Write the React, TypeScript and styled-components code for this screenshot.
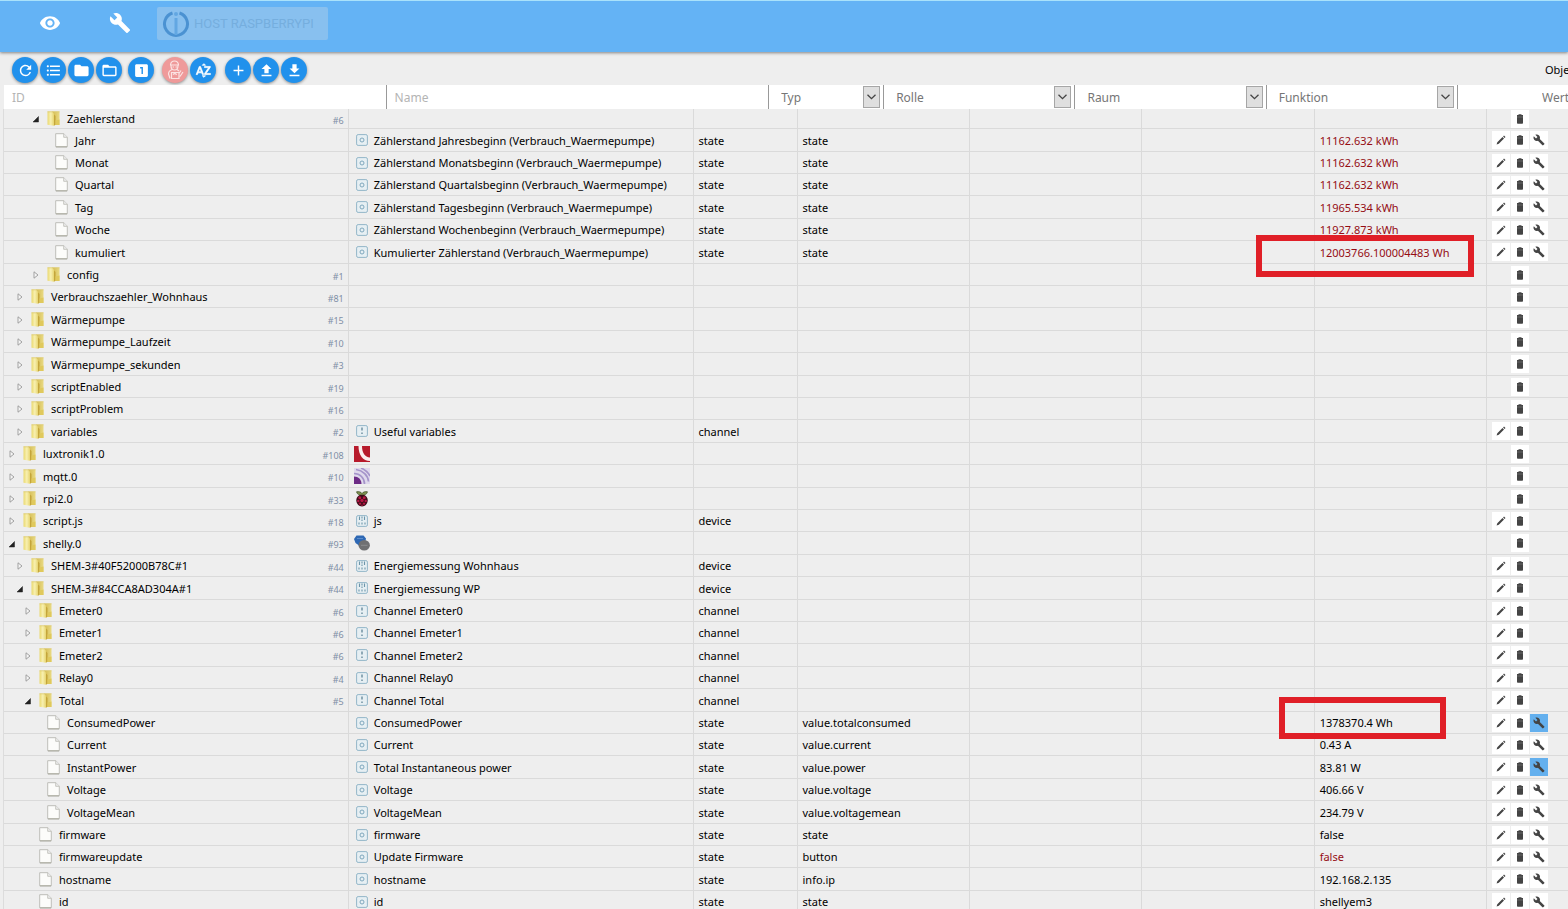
import React from 'react';
import styled, { createGlobalStyle } from 'styled-components';
import {
  MdVisibility, MdBuild, MdRefresh, MdFormatListBulleted, MdFolder, MdFolderOpen,
  MdLooksOne, MdSortByAlpha, MdAdd,
} from 'react-icons/md';

const GlobalStyle = createGlobalStyle`
  * { box-sizing: border-box; }
  body {
    margin: 0;
    background: #eee;
    color: #000;
    font: 11px/18px "Noto Sans", "Open Sans", sans-serif;
  }
  button, input, select { font: inherit; margin: 0; padding: 0; border: 0; border-radius: 0; }
  button { display: flex; align-items: center; justify-content: center; cursor: pointer; }
`;

const Shell = styled.div`
  display: flex;
  flex-direction: column;
  height: 100vh;
  overflow: hidden;
`;

const TopBar = styled.header`
  display: flex;
  flex: none;
  align-items: flex-start;
  height: 52px;
  padding: 6px 0 0 38px;
  background: #64b3f5;
  border-top: 1px solid #a9e2fb;
  box-shadow: 0 1px 3px rgba(0, 0, 0, 0.45);
`;

const NavButton = styled.button`
  width: 24px;
  height: 32px;
  margin-right: 46px;
  background: none;
  color: #fff;
  font-size: 22px;
`;

const HostButton = styled.button`
  gap: 4px;
  height: 33px;
  padding: 0 14px 0 5px;
  margin-left: -21px;
  border-radius: 2px;
  background: #88c0ef;
  color: #75aede;
  font-size: 13px;
  font-family: Roboto, sans-serif;
  white-space: nowrap;
`;

const Toolbar = styled.div`
  display: flex;
  flex: none;
  align-items: center;
  height: 33px;
  padding: 3px 0 0 12px;
`;

const ToolGroup = styled.div<{ $lead: number }>`
  display: flex;
  gap: 2px;
  margin-left: ${(p) => p.$lead}px;
`;

const ToolButton = styled.button<{ $tone?: 'red' }>`
  width: 26px;
  height: 26px;
  border-radius: 50%;
  background: ${(p) => (p.$tone === 'red' ? '#ef9a9a' : '#2191ec')};
  color: ${(p) => (p.$tone === 'red' ? '#fbe3e3' : '#fff')};
  box-shadow: 0 1px 3px rgba(0, 0, 0, 0.4);
  font-size: 17px;
`;

const SortIcon = styled(MdSortByAlpha)`
  path:not([fill='none']) {
    stroke: currentColor;
    stroke-width: 1px;
  }
  path[fill='none'] { stroke: none; }
`;

const ObjectCount = styled.span`
  width: 23px;
  margin-left: auto;
  white-space: nowrap;
`;

const FilterBar = styled.div`
  display: grid;
  flex: none;
  grid-template-columns: 2fr 2fr 115px 1fr 1fr 1fr 110px;
  height: 24px;
  margin-left: 4px;
  background: #fff;
  font-size: 12px;
`;

const TextFilter = styled.input`
  width: 100%;
  min-width: 0;
  padding: 2px 0 0 8px;
  border-right: 1px solid #999;
  background: none;
  outline: none;
  &::placeholder { color: #b4b4b4; opacity: 1; }
`;

const SelectBox = styled.label<{ $last?: boolean }>`
  display: flex;
  justify-content: space-between;
  align-items: center;
  min-width: 0;
  padding: 0 ${(p) => (p.$last ? 0 : 3)}px 0 ${(p) => (p.$last ? 84 : 12)}px;
  border-right: ${(p) => (p.$last ? 0 : 1)}px solid #999;
`;

const Select = styled.select`
  flex: 1;
  min-width: 0;
  padding-top: 2px;
  appearance: none;
  background: none;
  color: #767676;
  outline: none;
`;

const SelectArrow = styled.span`
  display: flex;
  flex: none;
  align-items: center;
  justify-content: center;
  width: 17px;
  height: 22px;
  border: 1px solid #a6a6a6;
  background: #dfdfdf;
`;

const Table = styled.table`
  display: block;
  margin-left: 3px;
  border-left: 1px solid #dcdcdc;
`;

const Body = styled.tbody`
  display: block;
`;

const Row = styled.tr`
  display: grid;
  grid-template-columns: 2fr 2fr 104px 1fr 1fr 1fr 1fr 81px;
  height: 22px;
  border-bottom: 1px solid #dadada;
  &:nth-child(5n), &:nth-child(5n + 2) { height: 23px; }
  &:first-child { height: 20px; }
`;

const Cell = styled.td<{ $red?: boolean }>`
  display: flex;
  position: relative;
  align-items: center;
  min-width: 0;
  padding: 1px 4px 0 5px;
  border-right: 1px solid #dadada;
  color: ${(p) => (p.$red ? '#950d14' : '#000')};
  white-space: nowrap;
  &:last-child { border-right: 0; padding: 0 0 0 5px; }
`;

const TreeCell = styled(Cell)<{ $level: number }>`
  padding-left: ${(p) => 3 + p.$level * 8}px;
`;

const Expander = styled.button`
  flex: none;
  width: 10px;
  height: 16px;
  background: none;
`;

const IconSlot = styled.span<{ $width: number; $gap: number }>`
  display: flex;
  flex: none;
  justify-content: center;
  width: ${(p) => p.$width}px;
  margin-right: ${(p) => p.$gap}px;
  padding-bottom: 1px;
`;

const Blank = styled.span`
  flex: none;
  width: 10px;
`;

const Count = styled.span`
  margin-left: auto;
  padding-top: 3px;
  color: #7f8ea6;
  font-size: 9px;
  line-height: 14px;
`;

const Actions = styled.div`
  display: grid;
  grid-template-columns: repeat(3, 18px);
  gap: 1px;
`;

const ActionButton = styled.button<{ $column: number; $active?: boolean }>`
  grid-column: ${(p) => p.$column};
  height: 18px;
  background: ${(p) => (p.$active ? '#64b0ee' : '#fff')};
  color: #444;
  font-size: 12px;
`;

const Marker = styled.span<{ $left: number; $top: number; $width: number }>`
  position: absolute;
  z-index: 1;
  left: ${(p) => p.$left}px;
  top: ${(p) => p.$top}px;
  width: ${(p) => p.$width}px;
  height: 42px;
  border: 6px solid #e01f27;
  pointer-events: none;
`;

const HostLogo = () => (
  <svg width="28" height="28" viewBox="0 0 28 28" fill="none" stroke="#4b92d2">
    <path d="M10.500 3A11.500 11.500 0 1 0 17.500 3" strokeWidth="3" />
    <path d="M14 8v17" strokeWidth="3" stroke="#62a7e2" />
    <circle cx="14" cy="4" r="2" fill="#62a7e2" stroke="none" />
  </svg>
);

const ExpertIcon = () => (
  <svg width="20" height="20" viewBox="0 0 20 20" fill="none" stroke="currentColor" strokeWidth="1.200">
    <path d="M5.500 4.500C6 2 7.500 1 9.500 1s3.500 1 4 3.500M5 5h9M6 5.500c0 3 1.500 4.500 3.500 4.500S13 8.500 13 5.500" />
    <path d="M7 9.500c-2.500 1-3.500 2-3.500 4.500l1.500 4.500M12 9.500l2 1.500M6.500 12.500h7.500v6H6.500zM15 16.500l3-4.500M16 10.500l-2 3" />
    <path d="M8 14.500c1.500-1.500 3-1 3.500.5M7.500 7h1.500M10.500 7H12" />
  </svg>
);

const TransferIcon = ({ up }: { up?: boolean }) => (
  <svg width="17" height="17" viewBox="0 0 24 24" fill="currentColor">
    <path d={up ? 'M9 16h6v-6h4l-7-7-7 7h4zm-4 2h14v2H5z' : 'M19 9h-4V3H9v6H5l7 7 7-7zM5 18v2h14v-2z'} />
  </svg>
);

const Chevron = () => (
  <svg width="9" height="6" viewBox="0 0 9 6" fill="none" stroke="#444" strokeWidth="1.300">
    <path d="M.5.7l4 4 4-4" />
  </svg>
);

const Arrow = ({ open }: { open?: boolean }) => (
  <svg width="8" height="8" viewBox="0 0 8 8">
    {open
      ? <path d="M6.500 1.500V7H1z" fill="#222" stroke="#222" strokeWidth=".5" />
      : <path d="M2 .8l4 3.200-4 3.200z" fill="#f6f6f6" stroke="#999" strokeWidth=".9" />}
  </svg>
);

const FolderIcon = () => (
  <svg width="13" height="15" viewBox="0 0 13 15">
    <defs>
      <linearGradient id="folder-front" x1="0" x2="1">
        <stop offset="0" stopColor="#ead970" />
        <stop offset=".5" stopColor="#f8f0b0" />
        <stop offset="1" stopColor="#e6d470" />
      </linearGradient>
      <linearGradient id="folder-back" x1="0" x2="1">
        <stop offset="0" stopColor="#d3b94e" />
        <stop offset="1" stopColor="#e9da84" />
      </linearGradient>
    </defs>
    <path d="M5 .5h7.500v13.500H5z" fill="url(#folder-back)" />
    <path d="M.5.5H5l2 2v12.300L.5 13.800z" fill="url(#folder-front)" />
    <path d="M7 3.500v11.300l1.500-1V5z" fill="#c4a53a" />
    <path d="M8.500 9.500l4-1V14h-4z" fill="#e0c95c" />
    <path d="M.5.800h12" stroke="#dccb74" strokeWidth=".8" />
  </svg>
);

const FileIcon = () => (
  <svg width="13" height="15" viewBox="0 0 13 15">
    <path d="M.7.7h8.100l3.500 3.500v9.600H.7z" fill="#fcfcfa" stroke="#b9b9b2" strokeWidth=".9" />
    <path d="M8.700.7v3.600h3.600" fill="#eee" stroke="#b9b9b2" strokeWidth=".8" />
    <path d="M1 13.900h11" stroke="#a9a99b" />
  </svg>
);

type Kind = 'state' | 'channel' | 'device' | 'lux' | 'mqtt' | 'rpi' | 'shelly';

const KindIcon = ({ kind }: { kind: Kind }) => {
  if (kind === 'lux') {
    return (
      <svg width="16" height="16" viewBox="0 0 16 16">
        <path d="M0 0h16v16H0z" fill="#b71a2b" />
        <path d="M4.500 0H8c0 7 3 11 8 11.500V15C9 15 4.500 9 4.500 0z" fill="#fbeeee" />
      </svg>
    );
  }
  if (kind === 'mqtt') {
    return (
      <svg width="16" height="16" viewBox="0 0 16 16" fill="none">
        <path d="M0 0h16v16H0z" fill="#dfd9ec" />
        <path d="M0 8.500c4.500 0 7.500 3 7.500 7.500H0z" fill="#6d2c86" />
        <path d="M0 5.500c6 0 10.500 4.500 10.500 10.500M2 1.500c7 1 12 6 12.500 12M7 0c4 1.500 7 4.500 9 8" stroke="#a594ca" strokeWidth="1.700" />
      </svg>
    );
  }
  if (kind === 'rpi') {
    return (
      <svg width="16" height="16" viewBox="0 0 16 16">
        <path d="M8 4.500C6 4.500 3 3.500 2.500.8 5 .2 7 1 8 2.500 9 1 11 .2 13.500.8 13 3.500 10 4.500 8 4.500z" fill="#7d9150" stroke="#33401f" strokeWidth=".6" />
        <path d="M8 3.800c3 0 5.700 2 5.700 5.500S11 15.500 8 15.500 2.300 12.800 2.300 9.300 5 3.800 8 3.800z" fill="#3d0c18" />
        <g fill="#b81745">
          <circle cx="5.800" cy="6.800" r="1.500" /><circle cx="10.200" cy="6.800" r="1.500" />
          <circle cx="8" cy="9.500" r="1.700" /><circle cx="4.300" cy="10" r="1.200" />
          <circle cx="11.700" cy="10" r="1.200" /><circle cx="6" cy="12.600" r="1.200" />
          <circle cx="10" cy="12.600" r="1.200" /><circle cx="8" cy="14.300" r=".8" />
        </g>
      </svg>
    );
  }
  if (kind === 'shelly') {
    return (
      <svg width="16" height="16" viewBox="0 0 16 16">
        <path d="M2.500.5h7l2.500 3-1 5-6 2L1.500 8 0 4z" fill="#2e68b4" />
        <path d="M3 3.500h6" stroke="#5c8ccb" />
        <ellipse cx="10.200" cy="10.200" rx="5.700" ry="5.300" fill="#6f7072" />
        <path d="M7 10.300h6.500" stroke="#8b8c8e" />
      </svg>
    );
  }
  return (
    <svg width="12" height="12" viewBox="0 0 12 12" fill="none" stroke="#93b6c8">
      <rect x=".6" y=".6" width="10.800" height="10.800" rx="1.500" fill="#e6eff3" />
      {kind === 'state' && <circle cx="6" cy="6" r="2" stroke="#7fa7bd" />}
      {kind === 'channel' && <path d="M6 2.500v3M6 7.500v1.500" stroke="#5f8295" strokeWidth="1.300" />}
      {kind === 'device' && (
        <path d="M3.500 1.500V5M6 1.500v2M6 4.500V6M8.500 1.500V5M3 7.500v2M6 7.500v2M9 7.500v2" stroke="#6c95a9" strokeWidth="1.100" />
      )}
    </svg>
  );
};

const PencilIcon = () => (
  <svg width="10" height="10" viewBox="0 0 10 10" fill="#444">
    <path d="M.6 9.500l.7-2.300L6.500 2l1.500 1.500-5.200 5.300zM7.100 1.400l.9-.9 1.500 1.500-.9.900z" />
  </svg>
);

const TrashIcon = () => (
  <svg width="8" height="10" viewBox="0 0 8 10" fill="#444">
    <path d="M1 1h1.500V.3h3V1H7v1.300H1zM1 3h6v6.200l-.7.600H1.700L1 9.200z" />
    <path d="M1 2h6v2H1z" fill="#555" />
  </svg>
);

interface Item {
  id: string;
  level: number;
  node?: 'open' | 'closed';
  count?: number;
  kind?: Kind;
  name?: string;
  type?: string;
  role?: string;
  value?: string;
  red?: boolean;
  linked?: boolean;
  actions: 1 | 2 | 3;
  marker?: { left: number; top: number; width: number };
}

const folder = (level: number, id: string, count: number, rest: Partial<Item> = {}): Item =>
  ({ level, id, count, node: 'closed', actions: 1, ...rest });
const leaf = (level: number, id: string, name: string, role: string, value: string, rest: Partial<Item> = {}): Item =>
  ({ level, id, name, role, value, kind: 'state', type: 'state', actions: 3, ...rest });
const channel = (name: string, rest: Partial<Item> = {}): Partial<Item> =>
  ({ kind: 'channel', type: 'channel', name, actions: 2, ...rest });
const device = (name: string, rest: Partial<Item> = {}): Partial<Item> =>
  ({ kind: 'device', type: 'device', name, actions: 2, ...rest });

const red = { red: true };

const items: Item[] = [
  folder(3, 'Zaehlerstand', 6, { node: 'open' }),
  leaf(4, 'Jahr', 'Zählerstand Jahresbeginn (Verbrauch_Waermepumpe)', 'state', '11162.632 kWh', red),
  leaf(4, 'Monat', 'Zählerstand Monatsbeginn (Verbrauch_Waermepumpe)', 'state', '11162.632 kWh', red),
  leaf(4, 'Quartal', 'Zählerstand Quartalsbeginn (Verbrauch_Waermepumpe)', 'state', '11162.632 kWh', red),
  leaf(4, 'Tag', 'Zählerstand Tagesbeginn (Verbrauch_Waermepumpe)', 'state', '11965.534 kWh', red),
  leaf(4, 'Woche', 'Zählerstand Wochenbeginn (Verbrauch_Waermepumpe)', 'state', '11927.873 kWh', red),
  leaf(4, 'kumuliert', 'Kumulierter Zählerstand (Verbrauch_Waermepumpe)', 'state', '12003766.100004483 Wh',
    { red: true, marker: { left: -59, top: -6, width: 218 } }),
  folder(3, 'config', 1),
  folder(1, 'Verbrauchszaehler_Wohnhaus', 81),
  folder(1, 'Wärmepumpe', 15),
  folder(1, 'Wärmepumpe_Laufzeit', 10),
  folder(1, 'Wärmepumpe_sekunden', 3),
  folder(1, 'scriptEnabled', 19),
  folder(1, 'scriptProblem', 16),
  folder(1, 'variables', 2, channel('Useful variables')),
  folder(0, 'luxtronik1.0', 108, { kind: 'lux' }),
  folder(0, 'mqtt.0', 10, { kind: 'mqtt' }),
  folder(0, 'rpi2.0', 33, { kind: 'rpi' }),
  folder(0, 'script.js', 18, device('js')),
  folder(0, 'shelly.0', 93, { kind: 'shelly', node: 'open' }),
  folder(1, 'SHEM-3#40F52000B78C#1', 44, device('Energiemessung Wohnhaus')),
  folder(1, 'SHEM-3#84CCA8AD304A#1', 44, device('Energiemessung WP', { node: 'open' })),
  folder(2, 'Emeter0', 6, channel('Channel Emeter0')),
  folder(2, 'Emeter1', 6, channel('Channel Emeter1')),
  folder(2, 'Emeter2', 6, channel('Channel Emeter2')),
  folder(2, 'Relay0', 4, channel('Channel Relay0')),
  folder(2, 'Total', 5, channel('Channel Total', { node: 'open' })),
  leaf(3, 'ConsumedPower', 'ConsumedPower', 'value.totalconsumed', '1378370.4 Wh',
    { linked: true, marker: { left: -36, top: -15, width: 167 } }),
  leaf(3, 'Current', 'Current', 'value.current', '0.43 A'),
  leaf(3, 'InstantPower', 'Total Instantaneous power', 'value.power', '83.81 W', { linked: true }),
  leaf(3, 'Voltage', 'Voltage', 'value.voltage', '406.66 V'),
  leaf(3, 'VoltageMean', 'VoltageMean', 'value.voltagemean', '234.79 V'),
  leaf(2, 'firmware', 'firmware', 'state', 'false'),
  leaf(2, 'firmwareupdate', 'Update Firmware', 'button', 'false', red),
  leaf(2, 'hostname', 'hostname', 'info.ip', '192.168.2.135'),
  leaf(2, 'id', 'id', 'state', 'shellyem3'),
];

const ItemRow = ({ item }: { item: Item }) => (
  <Row>
    <TreeCell $level={item.level}>
      {item.node
        ? <Expander aria-label={`Toggle ${item.id}`} aria-expanded={item.node === 'open'}><Arrow open={item.node === 'open'} /></Expander>
        : <Blank />}
      <IconSlot $width={25} $gap={1}>{item.node ? <FolderIcon /> : <FileIcon />}</IconSlot>
      {item.id}
      {item.count !== undefined && <Count>#{item.count}</Count>}
    </TreeCell>
    <Cell>
      {item.kind && <IconSlot $width={16} $gap={4}><KindIcon kind={item.kind} /></IconSlot>}
      {item.name}
    </Cell>
    <Cell>{item.type}</Cell>
    <Cell>{item.role}</Cell>
    <Cell />
    <Cell />
    <Cell $red={item.red}>
      {item.value}
      {item.marker && <Marker $left={item.marker.left} $top={item.marker.top} $width={item.marker.width} />}
    </Cell>
    <Cell>
      <Actions>
        {item.actions > 1 && <ActionButton $column={1} aria-label="Edit"><PencilIcon /></ActionButton>}
        <ActionButton $column={2} aria-label="Delete"><TrashIcon /></ActionButton>
        {item.actions > 2 && <ActionButton $column={3} $active={item.linked} aria-label="Configure"><MdBuild /></ActionButton>}
      </Actions>
    </Cell>
  </Row>
);

const FilterSelect = ({ label, last }: { label: string; last?: boolean }) => (
  <SelectBox $last={last}>
    <Select aria-label={label}><option>{label}</option></Select>
    {!last && <SelectArrow><Chevron /></SelectArrow>}
  </SelectBox>
);

export default function App() {
  return (
    <Shell>
      <GlobalStyle />
      <TopBar>
        <NavButton aria-label="View"><MdVisibility /></NavButton>
        <NavButton aria-label="Settings"><MdBuild /></NavButton>
        <HostButton><HostLogo />HOST RASPBERRYPI</HostButton>
      </TopBar>
      <Toolbar>
        <ToolGroup $lead={0}>
          <ToolButton aria-label="Refresh"><MdRefresh /></ToolButton>
          <ToolButton aria-label="List view"><MdFormatListBulleted /></ToolButton>
          <ToolButton aria-label="Collapse all"><MdFolder /></ToolButton>
          <ToolButton aria-label="Expand all"><MdFolderOpen /></ToolButton>
        </ToolGroup>
        <ToolGroup $lead={6}>
          <ToolButton aria-label="Expand one level"><MdLooksOne /></ToolButton>
        </ToolGroup>
        <ToolGroup $lead={8}>
          <ToolButton $tone="red" aria-label="Expert mode"><ExpertIcon /></ToolButton>
          <ToolButton aria-label="Sort"><SortIcon /></ToolButton>
        </ToolGroup>
        <ToolGroup $lead={9}>
          <ToolButton aria-label="Add"><MdAdd /></ToolButton>
          <ToolButton aria-label="Upload"><TransferIcon up /></ToolButton>
          <ToolButton aria-label="Download"><TransferIcon /></ToolButton>
        </ToolGroup>
        <ObjectCount>Obje</ObjectCount>
      </Toolbar>
      <FilterBar>
        <TextFilter placeholder="ID" aria-label="ID" />
        <TextFilter placeholder="Name" aria-label="Name" />
        <FilterSelect label="Typ" />
        <FilterSelect label="Rolle" />
        <FilterSelect label="Raum" />
        <FilterSelect label="Funktion" />
        <FilterSelect label="Wert" last />
      </FilterBar>
      <Table>
        <Body>
          {items.map((item, index) => <ItemRow key={index} item={item} />)}
        </Body>
      </Table>
    </Shell>
  );
}
